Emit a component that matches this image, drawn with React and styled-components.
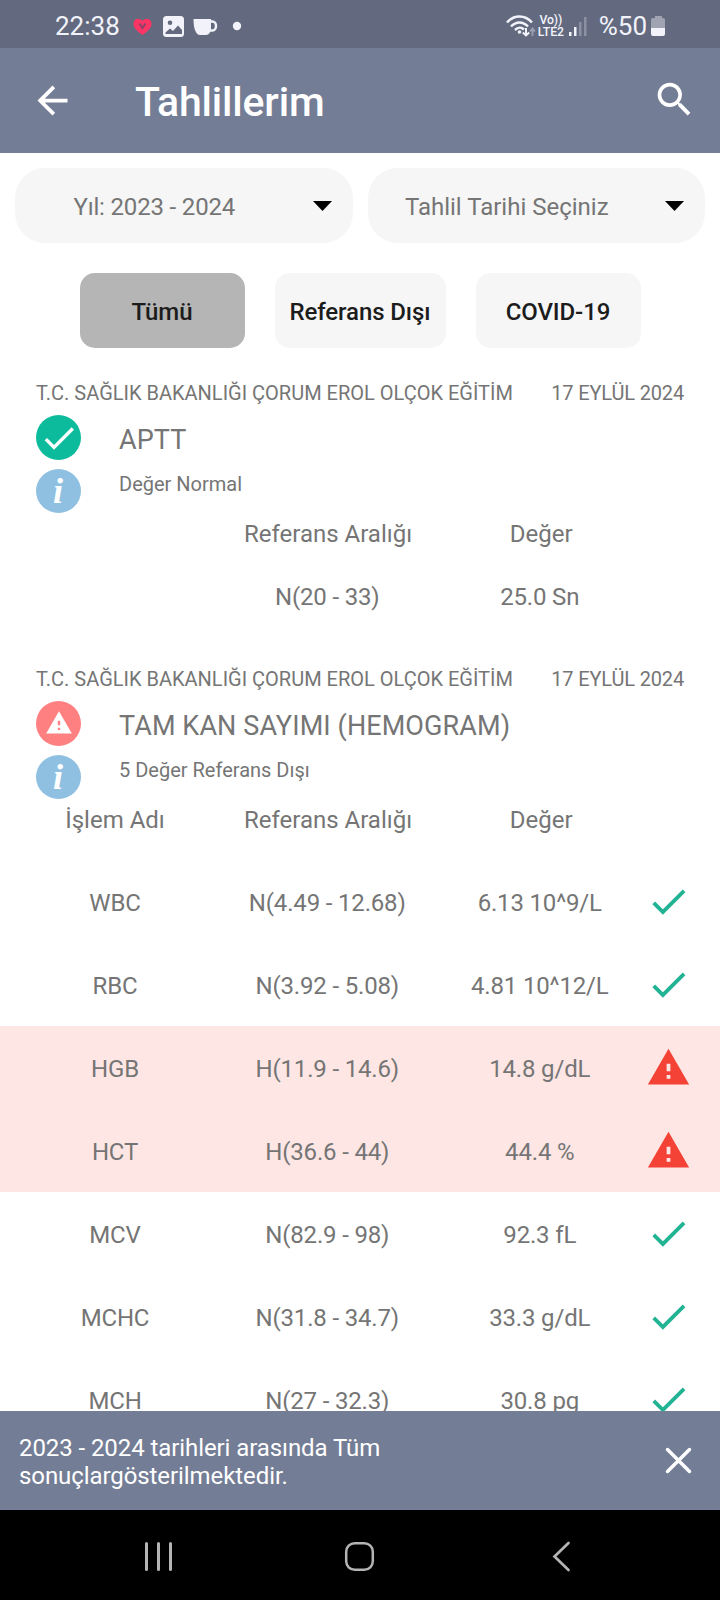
import React from 'react';
import styled, { createGlobalStyle } from 'styled-components';

const GlobalStyle = createGlobalStyle`
  * {
    box-sizing: border-box;
  }

  body {
    margin: 0;
    background: #fff;
    font-family: Roboto, 'Noto Sans', sans-serif;
    font-size: 24px;
    color: #757575;
  }

  svg {
    display: block;
    flex: none;
  }

  button {
    font: inherit;
    border: 0;
    padding: 0;
    background: none;
  }
`;

const Screen = styled.div`
  width: 720px;
  height: 1600px;
  display: flex;
  flex-direction: column;
  overflow: hidden;
  background: #fff;
`;

const StatusBar = styled.div`
  flex: none;
  height: 48px;
  padding: 4px 54px 0 55px;
  display: flex;
  align-items: center;
  justify-content: space-between;
  background: #636a7f;
  color: #f2f3fa;
`;

const StatusGroup = styled.div`
  display: flex;
  align-items: center;
  gap: ${props => props.$gap}px;
  height: 44px;
`;

const StatusText = styled.span`
  font-size: 26px;
  line-height: 44px;
`;

const Network = styled.div`
  width: 27px;
  margin: 1px 0 0 -3px;
  font-size: 12.2px;
  font-weight: 500;
  line-height: 11.5px;
  letter-spacing: -0.1px;
  text-align: center;
  white-space: nowrap;
`;

const AppBar = styled.header`
  flex: none;
  height: 105px;
  padding: 0 23px 0 30px;
  display: flex;
  align-items: center;
  background: #737d95;
  color: #fff;

  h1 {
    flex: 1;
    margin: 2px 0 0 60px;
    font-size: 41px;
    font-weight: 500;
    line-height: 48px;
    letter-spacing: -0.2px;
  }
`;

const SearchButton = styled.button`
  color: #fff;
  margin-bottom: 2px;
`;

const Content = styled.main`
  flex: 1;
  min-height: 0;
  overflow: hidden;
`;

const Filters = styled.div`
  display: flex;
  gap: 15px;
  padding: 15px 15px 0;
`;

const Select = styled.div`
  flex: 1;
  height: 75px;
  padding-right: 21px;
  display: flex;
  align-items: center;
  border-radius: 30px;
  background: #f6f6f6;

  span {
    flex: 1;
    padding: 2px 19px 0 0;
    letter-spacing: ${props => props.$spacing || '0'};
    text-align: center;
  }
`;

const Chips = styled.div`
  display: flex;
  justify-content: center;
  gap: 30px;
  margin-top: 30px;
`;

const Chip = styled.button`
  width: ${props => props.$wide ? 171 : 165}px;
  height: 75px;
  padding-top: 2px;
  border-radius: 15px;
  font-weight: 500;
  letter-spacing: -0.1px;
  white-space: nowrap;
  color: #1c1c1c;
  background: ${props => props.$active ? '#b5b5b5' : '#f6f6f6'};
`;

const Section = styled.section`
  margin-top: ${props => props.$first ? 33 : 58}px;
`;

const SectionHead = styled.div`
  display: flex;
  justify-content: space-between;
  padding: 0 36px;
  font-size: 20px;
  line-height: 24px;
  white-space: nowrap;
`;

const ResultDate = styled.span`
  letter-spacing: -0.15px;
`;

const Summary = styled.div`
  display: flex;
  gap: 38px;
  padding: 10px 36px 0;
`;

const Badges = styled.div`
  display: flex;
  flex-direction: column;
  gap: 9px;
`;

const Badge = styled.div`
  width: 45px;
  height: 45px;
  padding-bottom: ${props => props.$lift || 0}px;
  display: flex;
  align-items: center;
  justify-content: center;
  border-radius: 50%;
  color: #fff;
  background: ${props => props.$color};
`;

const InfoBadge = styled(Badge)`
  height: 44px;
  padding: 0 1px 1px 0;
  background: #8fc0e2;
  font: italic bold 36px 'Liberation Serif', serif;
`;

const SummaryText = styled.div`
  padding-top: 9px;

  h2 {
    margin: 0 0 16px;
    font-size: 27px;
    font-weight: 400;
    line-height: 32px;
    letter-spacing: 0.1px;
  }

  p {
    margin: 0;
    font-size: 20px;
    line-height: 24px;
  }
`;

const Row = styled.div`
  display: grid;
  grid-template-columns: 212px 212.5px 212.5px 45px;
  align-items: center;
  height: ${props => props.$height || 83}px;
  margin-top: ${props => props.$gap || 0}px;
  padding-left: 9px;
  text-align: center;
  white-space: nowrap;
`;

const LabelRow = styled(Row)`
  grid-template-columns: 212px 214px 212.5px 45px;
  margin-bottom: ${props => props.$below}px;
`;

const TestRow = styled(Row)`
  letter-spacing: -0.17px;
  background: ${props => props.$alert ? '#fde6e4' : 'transparent'};

  span {
    padding-top: 2px;
  }
`;

const Notice = styled.div`
  flex: none;
  height: 99px;
  padding: 0 28px 0 19px;
  display: flex;
  align-items: center;
  justify-content: space-between;
  background: #737d95;
  color: #fff;

  p {
    width: 400px;
    margin: 2px 0 0;
    line-height: 28px;
    letter-spacing: -0.08px;
  }
`;

const NavBar = styled.nav`
  flex: none;
  height: 90px;
  padding: 2px 149px 0 143px;
  display: grid;
  grid-template-columns: 201px 1fr auto;
  align-items: center;
  background: #000;
`;

const MaterialIcon = ({ d, size = 45, color = 'currentColor' }) => (
  <svg width={ size } height={ size } viewBox='0 0 24 24' fill={ color }>
    <path d={ d } fillRule='evenodd' />
  </svg>
);

const ICONS = {
  back: 'M20 11H7.83l5.59-5.59L12 4l-8 8 8 8 1.41-1.41L7.83 13H20z',
  search: 'M15.5 14h-.79l-.28-.27A6.47 6.47 0 0 0 16 9.5 6.5 6.5 0 1 0 9.5 16c1.61 0 3.09-.59 4.23-1.57l.27.28v.79l5 4.99L20.49 19zM9.5 14C7.01 14 5 11.99 5 9.5S7.01 5 9.5 5 14 7.01 14 9.5 11.99 14 9.5 14z',
  check: 'M9 16.17L4.83 12l-1.42 1.41L9 19 21 7l-1.41-1.41z',
  warning: 'M1 21h22L12 2zM13 18h-2v-2h2zM13 14h-2v-4h2z',
};

const Caret = () => (
  <svg width='19' height='10' viewBox='0 0 19 10'>
    <path d='M0 0H19L9.5 10z' fill='#000' />
  </svg>
);

const NotificationIcons = () => (
  <svg width='112' height='24' viewBox='130 14 112 24'>
    <path d='M142.500 35C137 31 133.500 28 133.500 24c0-5.500 6-7 9-3 3-4 9-2.500 9 3 0 4-3.500 7-9 11z' fill='#fb3566' />
    <path d='M139.500 23.500l3 4.500 3-4.500' fill='none' stroke='#8b4266' strokeWidth='2' />
    <rect x='163' y='16' width='21' height='21' rx='3.500' fill='#f2f3fa' />
    <circle cx='170' cy='22.700' r='2.300' fill='#636a7f' />
    <path d='M165.500 32.500l4.500-4 3 2.500 5-5.500 4 4.500V34h-16.500z' fill='#636a7f' />
    <path d='M193.500 19h17.500v9c0 4-2 7-5 7h-6c-4 0-6.500-6-6.500-16z' fill='#f2f3fa' />
    <path d='M210 21.500h2.500a3.500 4.500 0 0 1 0 9H209' fill='none' stroke='#f2f3fa' strokeWidth='2.500' />
    <circle cx='237' cy='26' r='4.200' fill='#f2f3fa' />
  </svg>
);

const WifiIcon = () => (
  <svg width='30' height='24' viewBox='506 14 30 24' fill='none' stroke='#f2f3fa' strokeWidth='2.500'>
    <path d='M507 22.500c7-8 18-8 25 0M511 26.500c5-5.500 12-5.500 17 0M515 30c3-3 6.500-3 9-.5' />
    <circle cx='519.500' cy='32' r='1.800' fill='#f2f3fa' stroke='none' />
    <path d='M526 28v7M522.800 32.500l3.200 3 3.200-3' strokeWidth='2' />
    <path d='M532.500 36v-7M530 31.500l2.500-3 2.500 3' strokeWidth='1.800' stroke='#9ba0b0' />
  </svg>
);

const SignalIcon = () => (
  <svg width='20' height='24' viewBox='570 14 20 24'>
    <path d='M571 32h2.500v4H571zM576 27h2.500v9H576z' fill='#f2f3fa' />
    <path d='M581 22h2.500v14H581zM586 17h2.500v19H586z' fill='#8b91a2' />
  </svg>
);

const BatteryIcon = () => (
  <svg width='15' height='24' viewBox='651 14 15 24'>
    <path d='M651 28v-8q0-2 2-2h2v-2h7v2h1q2 0 2 2v8z' fill='#a0a4b2' />
    <path d='M651 28h14v6q0 2-2 2h-10q-2 0-2-2z' fill='#f2f3fa' />
  </svg>
);

const tests = [
  { name: 'WBC', range: 'N(4.49 - 12.68)', value: '6.13 10^9/L' },
  { name: 'RBC', range: 'N(3.92 - 5.08)', value: '4.81 10^12/L' },
  { name: 'HGB', range: 'H(11.9 - 14.6)', value: '14.8 g/dL', alert: true },
  { name: 'HCT', range: 'H(36.6 - 44)', value: '44.4 %', alert: true },
  { name: 'MCV', range: 'N(82.9 - 98)', value: '92.3 fL' },
  { name: 'MCHC', range: 'N(31.8 - 34.7)', value: '33.3 g/dL' },
  { name: 'MCH', range: 'N(27 - 32.3)', value: '30.8 pg' },
];

const ResultHeader = ({ title, status, alert }) => (
  <>
    <SectionHead>
      <span>T.C. SAĞLIK BAKANLIĞI ÇORUM EROL OLÇOK EĞİTİM</span>
      <ResultDate>17 EYLÜL 2024</ResultDate>
    </SectionHead>
    <Summary>
      <Badges>
        <Badge $color={ alert ? '#ff8080' : '#0cbb9b' } $lift={ alert ? 2 : 0 }>
          <MaterialIcon d={ alert ? ICONS.warning : ICONS.check } size={ alert ? 28 : 40 } />
        </Badge>
        <InfoBadge>i</InfoBadge>
      </Badges>
      <SummaryText>
        <h2>{ title }</h2>
        <p>{ status }</p>
      </SummaryText>
    </Summary>
  </>
);

class App extends React.Component {
  renderTest(test) {
    return (
      <TestRow key={ test.name } $alert={ test.alert }>
        <span>{ test.name }</span>
        <span>{ test.range }</span>
        <span>{ test.value }</span>
        <MaterialIcon
          d={ test.alert ? ICONS.warning : ICONS.check }
          color={ test.alert ? '#f44336' : '#22b394' }
        />
      </TestRow>
    );
  }

  render() {
    return (
      <Screen>
        <GlobalStyle />

        <StatusBar>
          <StatusGroup $gap={ 10 }>
            <StatusText>22:38</StatusText>
            <NotificationIcons />
          </StatusGroup>
          <StatusGroup $gap={ 4 }>
            <WifiIcon />
            <Network>Vo))<br />LTE2</Network>
            <SignalIcon />
            <StatusText>&nbsp;%50</StatusText>
            <BatteryIcon />
          </StatusGroup>
        </StatusBar>

        <AppBar>
          <MaterialIcon d={ ICONS.back } />
          <h1>Tahlillerim</h1>
          <SearchButton aria-label='Ara'><MaterialIcon d={ ICONS.search } /></SearchButton>
        </AppBar>

        <Content>
          <Filters>
            <Select $spacing='-0.17px'><span>Yıl: 2023 - 2024</span><Caret /></Select>
            <Select><span>Tahlil Tarihi Seçiniz</span><Caret /></Select>
          </Filters>
          <Chips>
            <Chip $active>Tümü</Chip>
            <Chip $wide>Referans Dışı</Chip>
            <Chip>COVID-19</Chip>
          </Chips>

          <Section $first>
            <ResultHeader title='APTT' status='Değer Normal' />
            <LabelRow $height={ 28 } $gap={ 7 } $below={ 33 }>
              <span />
              <span>Referans Aralığı</span>
              <span>Değer</span>
            </LabelRow>
            <TestRow $height={ 28 }>
              <span />
              <span>N(20 - 33)</span>
              <span>25.0 Sn</span>
            </TestRow>
          </Section>

          <Section>
            <ResultHeader title='TAM KAN SAYIMI (HEMOGRAM)' status='5 Değer Referans Dışı' alert />
            <LabelRow $height={ 28 } $gap={ 7 } $below={ 26 }>
              <span>İşlem Adı</span>
              <span>Referans Aralığı</span>
              <span>Değer</span>
            </LabelRow>
            { tests.map(this.renderTest) }
          </Section>
        </Content>

        <Notice>
          <p>2023 - 2024 tarihleri arasında Tüm sonuçlargösterilmektedir.</p>
          <svg width='27' height='27' viewBox='0 0 27 27' stroke='#fff' strokeWidth='3.500' strokeLinecap='round'>
            <path d='M2.500 2.500l22 22M24.500 2.500l-22 22' />
          </svg>
        </Notice>

        <NavBar>
          <svg width='31' height='31' viewBox='0 0 31 31' stroke='#b4b4b4' strokeWidth='3' strokeLinecap='round'>
            <path d='M3.500 2.500v26M15.500 2.500v26M27.500 2.500v26' />
          </svg>
          <svg width='31' height='31' viewBox='0 0 31 31' fill='none' stroke='#b4b4b4' strokeWidth='2.500'>
            <rect x='2.200' y='2.200' width='26.600' height='26.600' rx='8.500' />
          </svg>
          <svg width='20' height='31' viewBox='0 0 20 31' fill='none' stroke='#b4b4b4' strokeWidth='2.700' strokeLinecap='round'>
            <path d='M17.500 2L3.500 15.500l14 13.500' />
          </svg>
        </NavBar>
      </Screen>
    );
  }
}

export default App;
